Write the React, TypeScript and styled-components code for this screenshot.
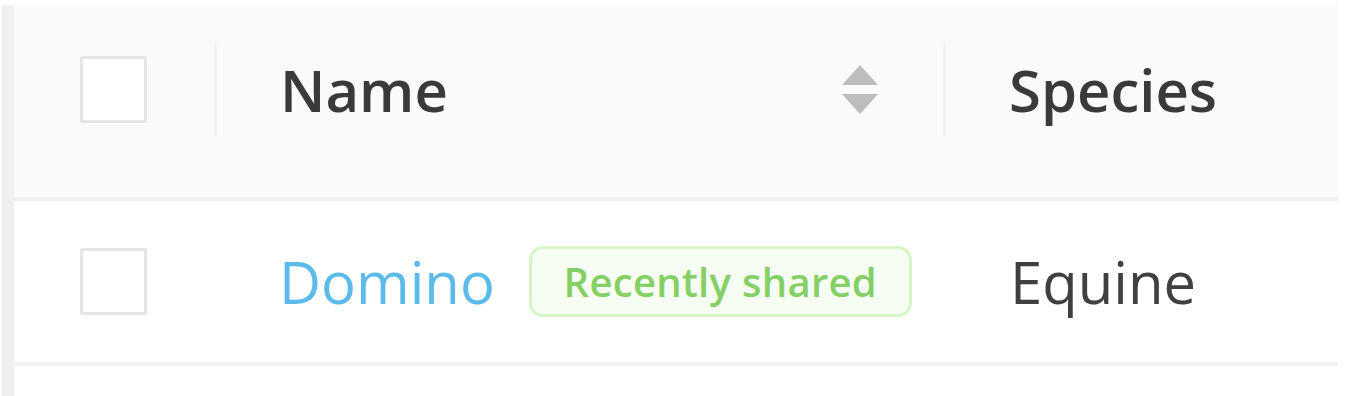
import styled, { createGlobalStyle } from 'styled-components';

const GlobalStyle = createGlobalStyle`
  html, body {
    margin: 0;
    padding: 0;
    background: #ffffff;
  }
  body {
    font-family: 'Open Sans', 'Noto Sans', sans-serif;
  }
`;

// 테이블 컬럼 폭
const COLUMNS = '203px 729px 1fr';

const Page = styled.div`
  padding-top: 5px;
  height: 391px;
  overflow: hidden;
`;

const Frame = styled.div`
  margin-left: 2px;
  border-left: 12px solid #f0f0f0;
  width: 1324px;
  height: 100%;
`;

const HeadRow = styled.div`
  display: grid;
  grid-template-columns: ${COLUMNS};
  height: 192px;
  background: #fafafa;
  border-bottom: 4px solid #f1f1f1;
`;

const BodyRow = styled.div`
  display: grid;
  grid-template-columns: ${COLUMNS};
  height: 161px;
  background: #ffffff;
  border-bottom: 4px solid #f3f3f3;
`;

const HeadCell = styled.div<{ $pad?: number }>`
  display: flex;
  align-items: center;
  padding-left: ${(p) => p.$pad ?? 66}px;
  padding-bottom: 23px;
`;

const BodyCell = styled.div<{ $pad?: number }>`
  display: flex;
  align-items: center;
  padding-left: ${(p) => p.$pad ?? 66}px;
`;

const Checkbox = styled.span`
  display: block;
  box-sizing: border-box;
  width: 67px;
  height: 67px;
  border: 3px solid #e6e6e6;
  border-radius: 2px;
  background: #ffffff;
`;

const Divider = styled.span<{ $end?: boolean }>`
  display: block;
  width: 3px;
  height: 92px;
  background: #f2f2f2;
  margin-left: ${(p) => (p.$end ? 'auto' : '0')};
`;

const HeadLabel = styled.span`
  font-size: 58px;
  font-weight: 600;
  color: #3a3a3a;
  line-height: 1;
  white-space: nowrap;
`;

const SortIcon = styled.svg`
  margin-left: auto;
  margin-right: 65px;
  flex: none;
`;

const PetLink = styled.a`
  font-size: 58px;
  font-weight: 400;
  color: #5cbbe9;
  text-decoration: none;
  line-height: 1;
  white-space: nowrap;
`;

const Badge = styled.span`
  display: inline-flex;
  align-items: center;
  justify-content: center;
  box-sizing: border-box;
  width: 383px;
  height: 71px;
  margin-left: 34px;
  border: 3px solid #d7f5c6;
  border-radius: 14px;
  background: #f6fdf2;
  color: #84d065;
  font-size: 40px;
  font-weight: 600;
  letter-spacing: 0.3px;
  white-space: nowrap;
`;

const CellText = styled.span`
  font-size: 58px;
  color: #404040;
  line-height: 1;
  white-space: nowrap;
`;

export default function App() {
  return (
    <>
      <GlobalStyle />
      <Page>
        <Frame>
          <HeadRow>
            <HeadCell>
              <Checkbox />
              <Divider $end />
            </HeadCell>
            <HeadCell $pad={63}>
              <HeadLabel>Name</HeadLabel>
              <SortIcon width="36" height="49" viewBox="0 0 36 49">
                <polygon points="18,0 36,20 0,20" fill="#bdbdbd" />
                <polygon points="0,29 36,29 18,49" fill="#bdbdbd" />
              </SortIcon>
              <Divider />
            </HeadCell>
            <HeadCell $pad={63}>
              <HeadLabel>Species</HeadLabel>
            </HeadCell>
          </HeadRow>
          <BodyRow>
            <BodyCell>
              <Checkbox />
            </BodyCell>
            <BodyCell $pad={62}>
              <PetLink href="#">Domino</PetLink>
              <Badge>Recently shared</Badge>
            </BodyCell>
            <BodyCell $pad={64}>
              <CellText>Equine</CellText>
            </BodyCell>
          </BodyRow>
        </Frame>
      </Page>
    </>
  );
}
